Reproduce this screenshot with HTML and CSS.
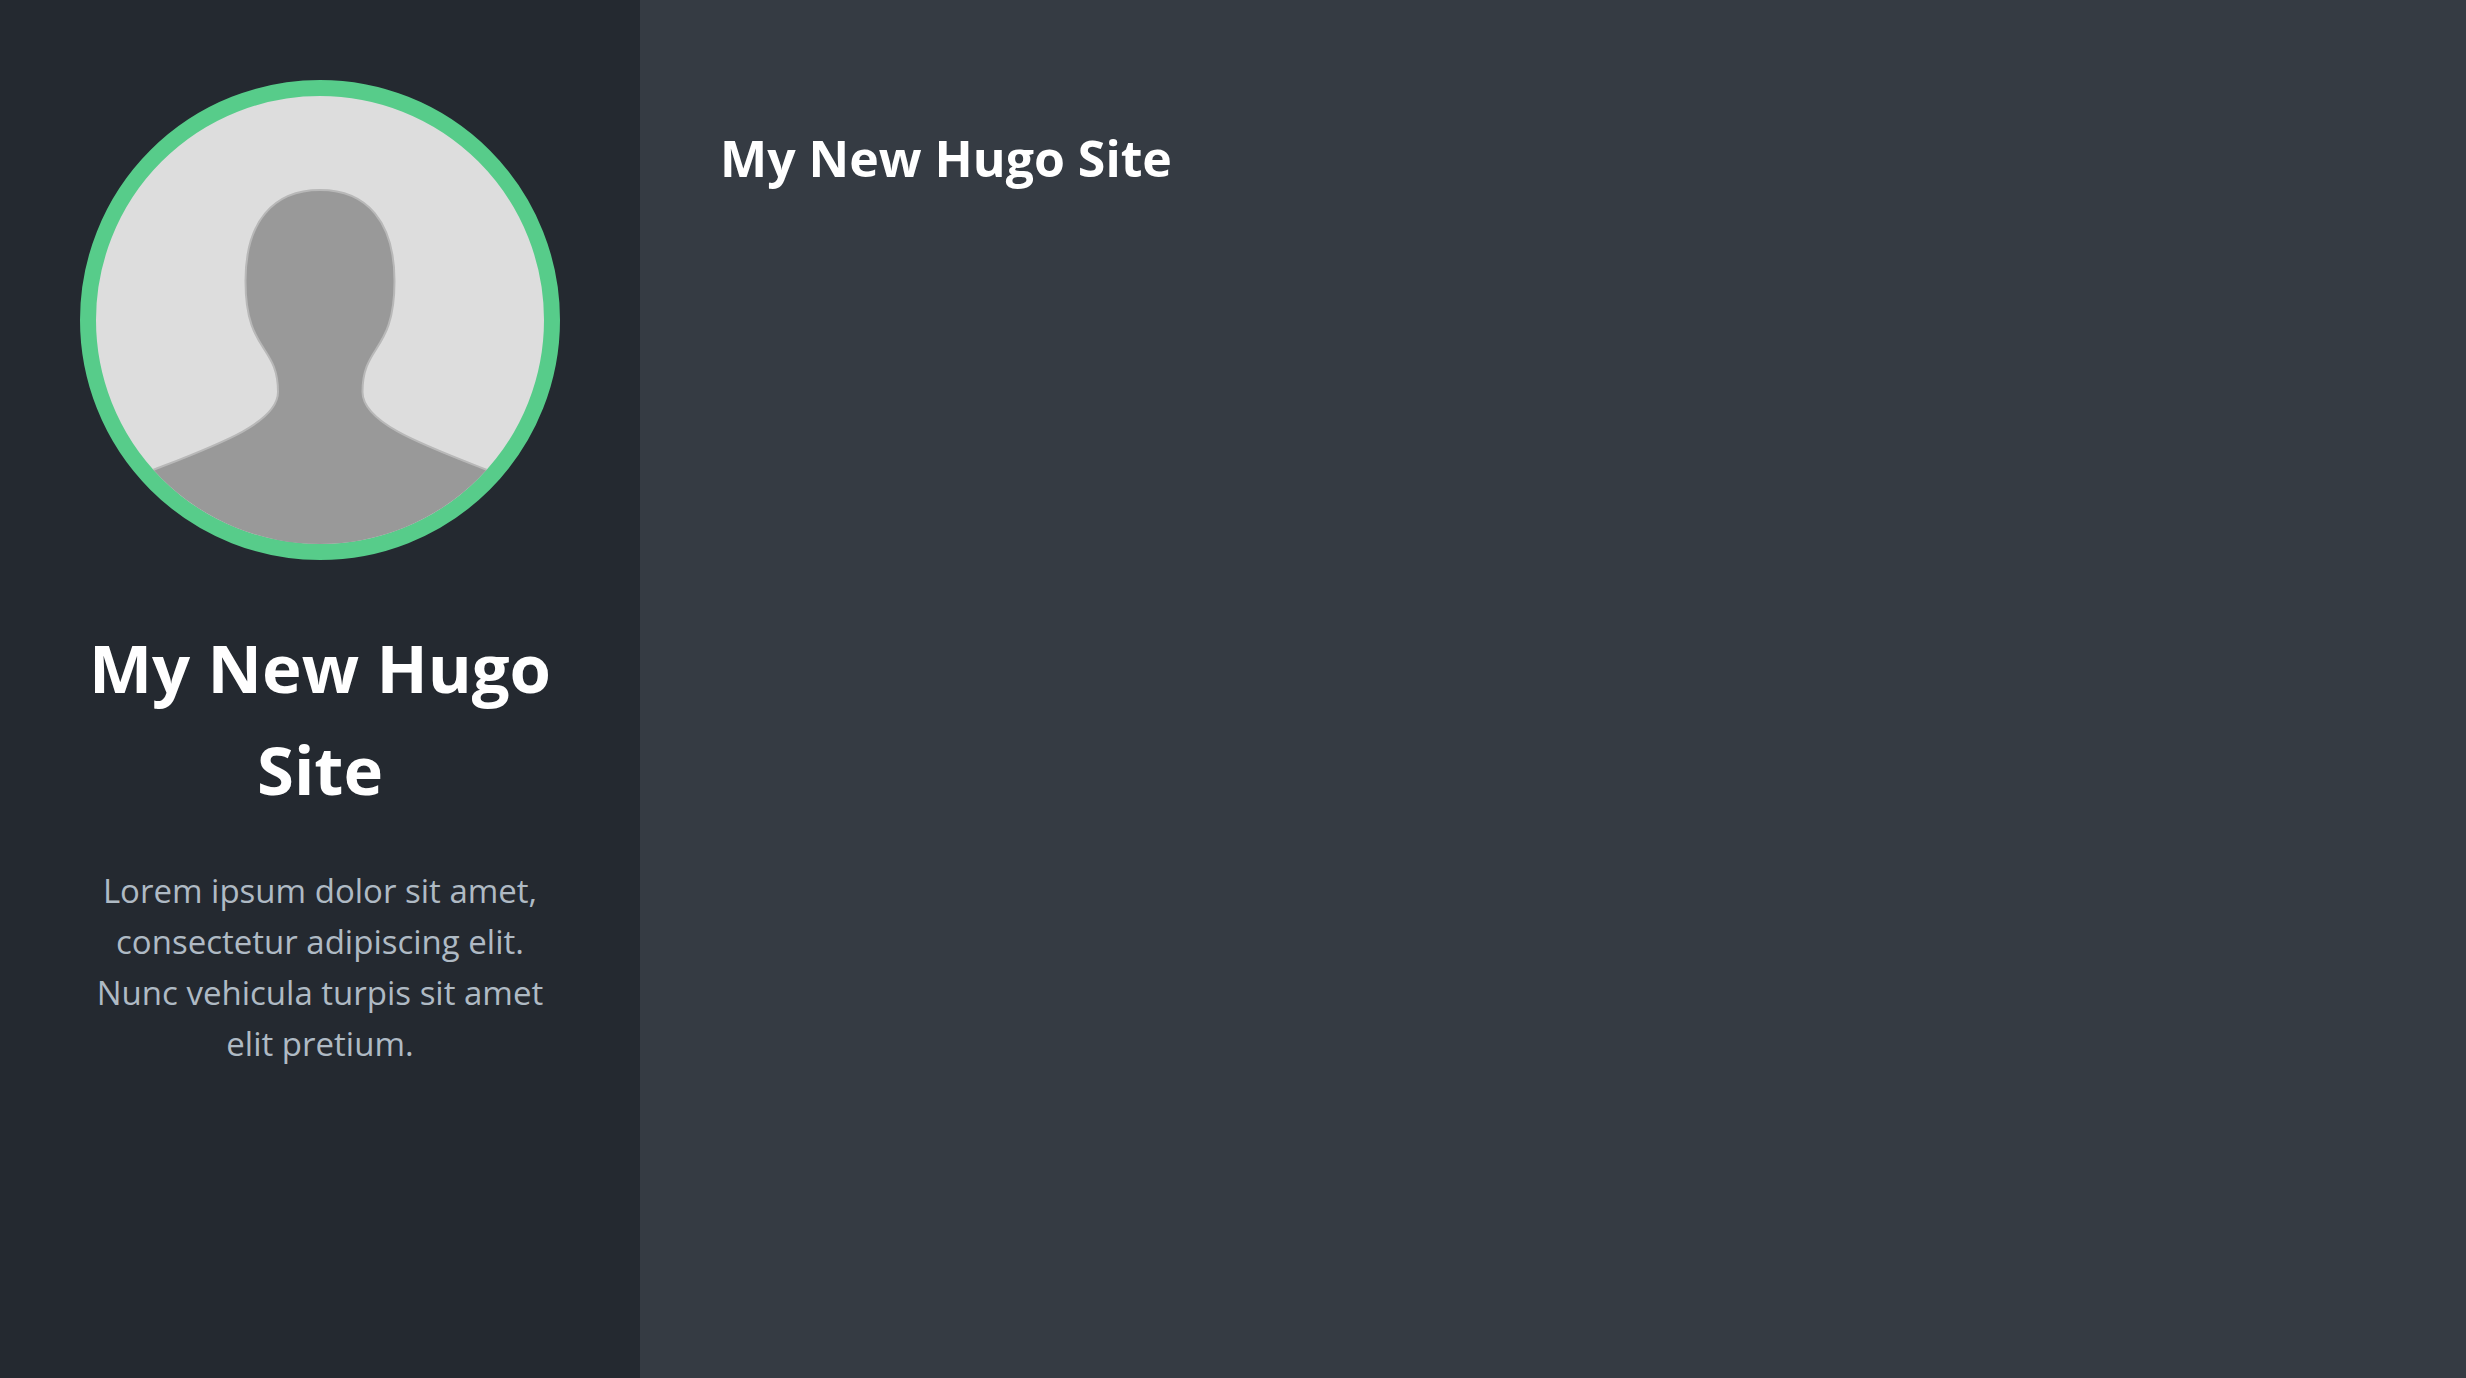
FILE: index.html
```html
<!DOCTYPE html>
<html lang="en">
<head>
  <meta charset="utf-8">
  <meta name="viewport" content="width=device-width, initial-scale=1">
  <title>My New Hugo Site</title>
  <link rel="stylesheet" href="styles.css">
</head>
<body>
  <div class="layout">
    <aside class="sidebar">
      <svg class="avatar" viewBox="0 0 448 448" role="img" aria-label="Profile picture">
        <path class="avatar-person" d="M224 94 C271 94 298.500 126 298.500 185 C298.500 257 266.500 248 266.500 296 C266.500 327 327 349 391 374 L448 396 V450 H0 V396 L57 374 C121 349 182 327 182 296 C182 248 149.500 257 149.500 185 C149.500 126 177 94 224 94 Z"/>
      </svg>
      <h1 class="site-title">My New Hugo Site</h1>
      <p class="tagline">Lorem ipsum dolor sit amet, consectetur adipiscing elit. Nunc vehicula turpis sit amet elit pretium.</p>
    </aside>
    <main class="content">
      <h2 class="page-title">My New Hugo Site</h2>
    </main>
  </div>
</body>
</html>
```
FILE: styles.css
```css
*,
*::before,
*::after {
  box-sizing: border-box;
}

body {
  margin: 0;
  background: #353b43;
  color: #afbac4;
  font-family: "Segoe UI", "Open Sans", "Noto Sans", sans-serif;
  font-size: 33px;
  line-height: 51px;
}

.layout {
  display: grid;
  grid-template-columns: 640px 1fr;
  min-height: 100vh;
}

.sidebar {
  padding: 80px;
  background: #242930;
  text-align: center;
}

.avatar {
  display: block;
  width: 100%;
  border: 16px solid #57cc8a;
  border-radius: 50%;
  background: #dddddd;
}

.avatar-person {
  fill: #999999;
  stroke: #b8b8b8;
  stroke-width: 2px;
}

.site-title,
.page-title {
  margin: 0;
  color: #ffffff;
  font-weight: 700;
}

.site-title {
  margin-top: 56px;
  font-size: 67px;
  line-height: 102px;
}

.tagline {
  margin: 45px 0 0;
}

.content {
  padding: 120px 80px;
}

.page-title {
  font-size: 50px;
  line-height: 76px;
}
```
